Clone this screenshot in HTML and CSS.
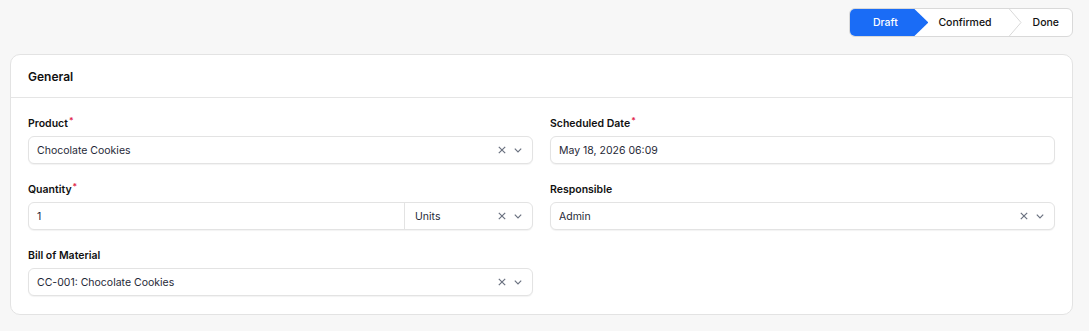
FILE: index.html
```html
<!DOCTYPE html>
<html>
<head>
<meta charset="utf-8">
<link rel="stylesheet" href="styles.css">
</head>
<body>
<div class="page">
  <div class="topbar">
    <div class="stepper">
      <div class="step step-active">Draft</div>
      <div class="step step-mid">Confirmed<svg class="sep" width="14" height="29" viewBox="0 0 14 29"><path d="M0.5 0 L13 14.5 L0.5 29" fill="none" stroke="#d9d9d9" stroke-width="1"/></svg></div>
      <div class="step step-last">Done</div>
    </div>
  </div>

  <div class="card">
    <div class="card-head">General</div>
    <div class="card-body">
      <div class="field">
        <div class="label">Product<span class="req">*</span></div>
        <div class="input select">
          <span class="val">Chocolate Cookies</span>
          <span class="icons">
            <svg width="10" height="10" viewBox="0 0 10 10"><path d="M1.8 1.8 L8.2 8.2 M8.2 1.8 L1.8 8.2" stroke="#6b7280" stroke-width="1.2" fill="none"/></svg>
            <svg width="10" height="10" viewBox="0 0 10 10"><path d="M1.8 3.6 L5 6.8 L8.2 3.6" stroke="#6b7280" stroke-width="1.2" fill="none"/></svg>
          </span>
        </div>
      </div>
      <div class="field">
        <div class="label">Scheduled Date<span class="req">*</span></div>
        <div class="input">
          <span class="val">May 18, 2026 06:09</span>
        </div>
      </div>
      <div class="field">
        <div class="label">Quantity<span class="req">*</span></div>
        <div class="input split">
          <span class="qty">1</span>
          <span class="unit">
            <span class="val">Units</span>
            <span class="icons">
              <svg width="10" height="10" viewBox="0 0 10 10"><path d="M1.8 1.8 L8.2 8.2 M8.2 1.8 L1.8 8.2" stroke="#6b7280" stroke-width="1.2" fill="none"/></svg>
              <svg width="10" height="10" viewBox="0 0 10 10"><path d="M1.8 3.6 L5 6.8 L8.2 3.6" stroke="#6b7280" stroke-width="1.2" fill="none"/></svg>
            </span>
          </span>
        </div>
      </div>
      <div class="field">
        <div class="label">Responsible</div>
        <div class="input select">
          <span class="val">Admin</span>
          <span class="icons">
            <svg width="10" height="10" viewBox="0 0 10 10"><path d="M1.8 1.8 L8.2 8.2 M8.2 1.8 L1.8 8.2" stroke="#6b7280" stroke-width="1.2" fill="none"/></svg>
            <svg width="10" height="10" viewBox="0 0 10 10"><path d="M1.8 3.6 L5 6.8 L8.2 3.6" stroke="#6b7280" stroke-width="1.2" fill="none"/></svg>
          </span>
        </div>
      </div>
      <div class="field">
        <div class="label">Bill of Material</div>
        <div class="input select">
          <span class="val">CC-001: Chocolate Cookies</span>
          <span class="icons">
            <svg width="10" height="10" viewBox="0 0 10 10"><path d="M1.8 1.8 L8.2 8.2 M8.2 1.8 L1.8 8.2" stroke="#6b7280" stroke-width="1.2" fill="none"/></svg>
            <svg width="10" height="10" viewBox="0 0 10 10"><path d="M1.8 3.6 L5 6.8 L8.2 3.6" stroke="#6b7280" stroke-width="1.2" fill="none"/></svg>
          </span>
        </div>
      </div>
    </div>
  </div>
</div>
</body>
</html>
```

FILE: styles.css
```css
* { box-sizing: border-box; }
html, body {
  margin: 0;
  padding: 0;
  background: #f7f7f7;
  font-family: Inter, "Noto Sans", sans-serif;
  color: #171717;
}
.page {
  padding: 8px 16px 0 10px;
}
.topbar {
  display: flex;
  justify-content: flex-end;
  margin-bottom: 17px;
}
.stepper {
  display: flex;
  height: 29px;
  background: #fff;
  border: 1px solid #d9d9d9;
  border-radius: 6px;
  overflow: hidden;
  font-size: 10.5px;
  font-weight: 500;
}
.step {
  display: flex;
  align-items: center;
  height: 100%;
}
.step-active {
  width: 79px;
  justify-content: center;
  padding-right: 7px;
  background: #1a6cf6;
  color: #fff;
  clip-path: polygon(0 0, 64px 0, 79px 50%, 64px 100%, 0 100%);
  position: relative;
  z-index: 1;
  margin: -1px 0 -1px -1px;
  height: calc(100% + 2px);
}
.step-mid {
  margin-left: -15px;
  padding-left: 25px;
  color: #111;
}
.sep {
  margin-left: 16px;
  display: block;
  flex: none;
}
.step-last {
  padding: 0 13px 0 11px;
  color: #111;
}
.card {
  background: #fff;
  border: 1px solid #e3e3e3;
  border-radius: 10px;
}
.card-head {
  height: 43px;
  display: flex;
  align-items: center;
  padding: 0 17px;
  font-size: 12px;
  font-weight: 600;
  color: #111;
  border-bottom: 1px solid #e5e5e5;
}
.card-body {
  display: grid;
  grid-template-columns: 1fr 1fr;
  column-gap: 17px;
  row-gap: 18px;
  padding: 18px 17px 18px 17px;
}
.label {
  font-size: 10.5px;
  font-weight: 600;
  line-height: 16px;
  margin-bottom: 4px;
  color: #111;
}
.req {
  color: #e11d48;
  font-size: 8.5px;
  vertical-align: top;
  margin-left: 1px;
  line-height: 10px;
}
.input {
  height: 28px;
  border: 1px solid #e3e3e3;
  border-radius: 6px;
  box-shadow: 0 1px 1px rgba(0,0,0,0.05);
  display: flex;
  align-items: center;
  padding: 0 9px 0 8px;
  font-size: 10.5px;
  color: #1f2937;
  background: #fff;
}
.val {
  flex: 1;
}
.icons {
  display: flex;
  align-items: center;
  gap: 6px;
}
.icons svg { display: block; }
.split {
  padding: 0;
}
.qty {
  flex: 1;
  padding-left: 8px;
  height: 100%;
  display: flex;
  align-items: center;
  border-right: 1px solid #e3e3e3;
}
.unit {
  width: 127px;
  display: flex;
  align-items: center;
  padding: 0 9px 0 10px;
}
```
